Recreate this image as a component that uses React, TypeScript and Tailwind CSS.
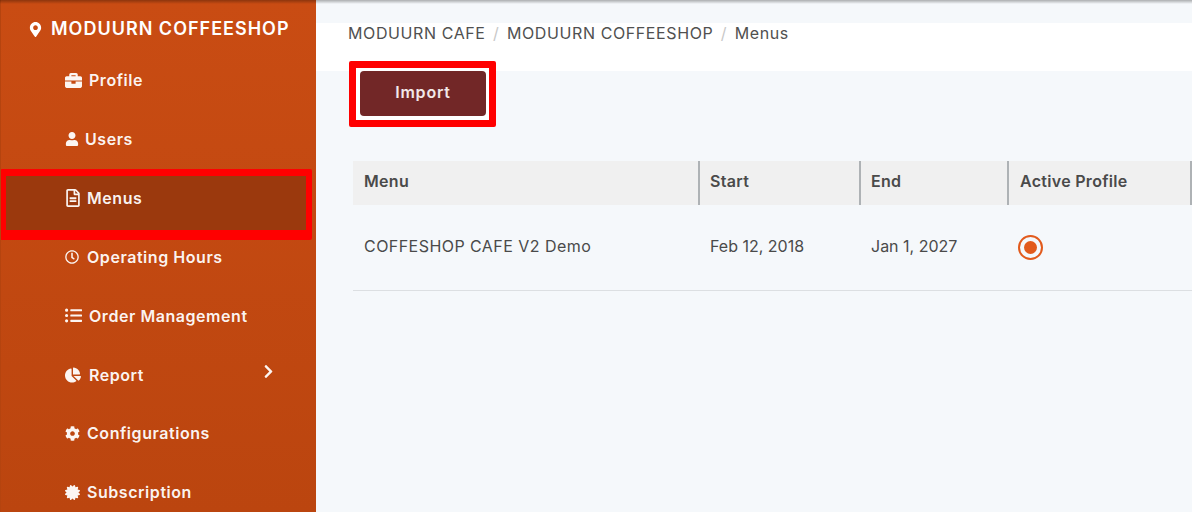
import {
  FaBriefcase,
  FaCertificate,
  FaChartPie,
  FaChevronRight,
  FaCog,
  FaListUl,
  FaMapMarkerAlt,
  FaRegClock,
  FaRegFileAlt,
  FaUser,
} from 'react-icons/fa';
import type { ComponentType } from 'react';

interface NavItem {
  label: string;
  icon: ComponentType<{ size?: number; className?: string }>;
  iconSize: number;
  gap: string;
  active?: boolean;
  chevron?: boolean;
}

const navItems: NavItem[] = [
  { label: 'Profile', icon: FaBriefcase, iconSize: 17, gap: 'gap-[7px]' },
  { label: 'Users', icon: FaUser, iconSize: 14, gap: 'gap-[6px]' },
  { label: 'Menus', icon: FaRegFileAlt, iconSize: 18, gap: 'gap-[5px]', active: true },
  { label: 'Operating Hours', icon: FaRegClock, iconSize: 14, gap: 'gap-[8px]' },
  { label: 'Order Management', icon: FaListUl, iconSize: 17, gap: 'gap-[7px]' },
  { label: 'Report', icon: FaChartPie, iconSize: 16, gap: 'gap-[8px]', chevron: true },
  { label: 'Configurations', icon: FaCog, iconSize: 15, gap: 'gap-[7px]' },
  { label: 'Subscription', icon: FaCertificate, iconSize: 15, gap: 'gap-[7px]' },
];

function SidebarRow({ item }: { item: NavItem }) {
  const Icon = item.icon;
  return (
    <div className={`flex h-[58.75px] shrink-0 items-center ${item.gap} pl-[64px] text-[16px] font-semibold tracking-[0.55px] text-white/95`}>
      <Icon size={item.iconSize} className="shrink-0" />
      <span>{item.label}</span>
      {item.chevron ? <FaChevronRight size={15} className="absolute left-[261px] -mt-[7px]" /> : null}
    </div>
  );
}

function Sidebar() {
  return (
    <aside className="flex h-full w-[316px] shrink-0 flex-col overflow-hidden border-l border-[#b5440f] bg-gradient-to-b from-[#c94c13] to-[#bb450f]">
      <div className="flex h-[51px] shrink-0 items-end gap-[8px] pb-[10px] pl-[27px] text-[18px] font-semibold leading-[24px] tracking-[1px] text-white">
        <FaMapMarkerAlt size={15} className="mb-[4px]" />
        <span>MODUURN COFFEESHOP</span>
      </div>
      {navItems.map((item) =>
        item.active ? (
          <div key={item.label} className="-mb-[11.75px] -ml-px h-[71px] w-[312px] shrink-0 rounded-[2px] border-x-[6px] border-b-[10px] border-t-[7px] border-[#ff0000] bg-[#9b390d]">
            <div className="-ml-[6px] -mt-[7px]">
              <SidebarRow item={item} />
            </div>
          </div>
        ) : (
          <SidebarRow key={item.label} item={item} />
        ),
      )}
    </aside>
  );
}

const columns = [
  { title: 'Menu', className: 'w-[347px] rounded-l-[4px] pl-[11px]' },
  { title: 'Start', className: 'w-[161px] pl-[10px]' },
  { title: 'End', className: 'w-[148px] pl-[10px]' },
  { title: 'Active Profile', className: 'w-[183px] pl-[11px]' },
];

function MenusTable() {
  return (
    <div className="ml-[37px] mt-[34px] w-[839px] text-[16px] text-[#4a4a4a]">
      <div className="flex h-[44px] bg-[#f0f0f0] font-semibold tracking-[0.3px]">
        {columns.map((col) => (
          <div key={col.title} className={`flex shrink-0 items-center border-r-2 border-[#aeb2b5] pb-[4px] ${col.className}`}>
            {col.title}
          </div>
        ))}
      </div>
      <div className="flex h-[86px] items-center border-b border-[#dcdfe2] pb-[3px]">
        <div className="w-[347px] shrink-0 pl-[11px] tracking-[0.45px]">COFFESHOP CAFE V2 Demo</div>
        <div className="w-[161px] shrink-0 pl-[10px]">Feb 12, 2018</div>
        <div className="w-[148px] shrink-0 pl-[10px]">Jan 1, 2027</div>
        <div className="mt-[2px] pl-[9px]">
          <span className="flex h-[25px] w-[25px] items-center justify-center rounded-full border-2 border-[#e25a1c]">
            <span className="h-[13px] w-[13px] rounded-full bg-[#e25a1c]" />
          </span>
        </div>
      </div>
    </div>
  );
}

export default function App() {
  return (
    <div className="relative flex h-[512px] w-[1192px] overflow-hidden bg-[#f5f8fb] font-['Inter',sans-serif]">
      <Sidebar />
      <main className="min-w-0 flex-1 pt-[23px]">
        <nav className="flex h-[48px] items-start bg-white pl-[32px] text-[16px] leading-[20px] tracking-[0.6px] text-[#505050]">
          <span>MODUURN CAFE</span>
          <span className="mx-[7.5px] text-[#c8c8c8]">/</span>
          <span>MODUURN COFFEESHOP</span>
          <span className="mx-[7.5px] text-[#c8c8c8]">/</span>
          <span>Menus</span>
        </nav>
        <div className="relative -mt-[10px] ml-[33px] w-[147px] rounded-[2px] border-[7px] border-[#ff0000] bg-white pb-[4px] pl-[4px] pr-[3px] pt-[3px]">
          <button type="button" className="flex h-[45px] w-[126px] items-center justify-center rounded-[4px] bg-[#722727] pb-[3px] text-[16px] font-semibold tracking-[0.8px] text-white/90">
            Import
          </button>
        </div>
        <MenusTable />
      </main>
      <div className="absolute inset-x-0 top-0 h-[4px] bg-gradient-to-b from-black/30 to-transparent" />
    </div>
  );
}
